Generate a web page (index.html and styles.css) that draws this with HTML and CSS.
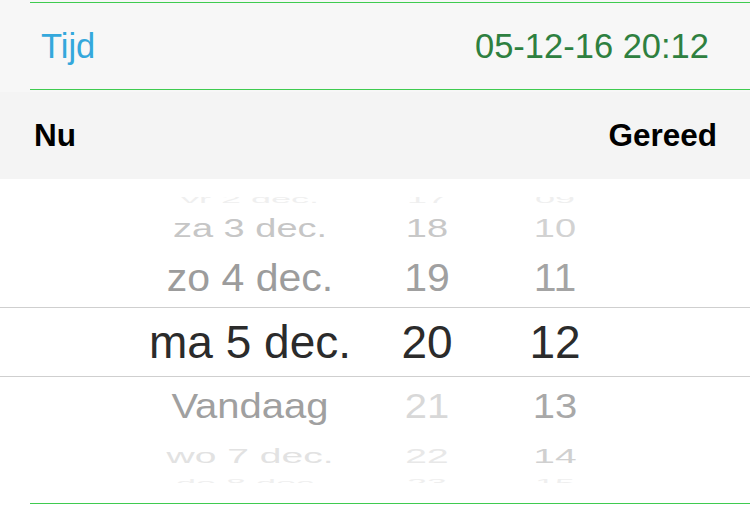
FILE: index.html
```html
<!DOCTYPE html>
<html lang="nl">
<head>
<meta charset="utf-8">
<title>Tijd</title>
<link rel="stylesheet" href="styles.css">
</head>
<body>
<div class="screen">
  <div class="field">
    <div class="green-line"></div>
    <div class="field-inner">
      <span class="field-label">Tijd</span>
      <span class="field-value">05-12-16 20:12</span>
    </div>
    <div class="green-line"></div>
  </div>
  <div class="toolbar">
    <span class="tb-btn">Nu</span>
    <span class="tb-btn">Gereed</span>
  </div>
  <div class="picker">
    <div class="prow r-top">
      <span class="cell c-date">vr 2 dec.</span><span class="cell c-h">17</span><span class="cell c-m">09</span>
    </div>
    <div class="prow r-za">
      <span class="cell c-date">za 3 dec.</span><span class="cell c-h">18</span><span class="cell c-m">10</span>
    </div>
    <div class="prow r-zo">
      <span class="cell c-date">zo 4 dec.</span><span class="cell c-h">19</span><span class="cell c-m">11</span>
    </div>
    <div class="prow r-sel">
      <span class="cell c-date">ma 5 dec.</span><span class="cell c-h">20</span><span class="cell c-m">12</span>
    </div>
    <div class="prow r-va">
      <span class="cell c-date">Vandaag</span><span class="cell c-h">21</span><span class="cell c-m">13</span>
    </div>
    <div class="prow r-wo">
      <span class="cell c-date">wo 7 dec.</span><span class="cell c-h">22</span><span class="cell c-m">14</span>
    </div>
    <div class="prow r-bot">
      <span class="cell c-date">do 8 dec.</span><span class="cell c-h">23</span><span class="cell c-m">15</span>
    </div>
  </div>
  <div class="green-line bottom"></div>
</div>
</body>
</html>
```

FILE: styles.css
```css
html, body {
  margin: 0;
  padding: 0;
  background: #ffffff;
}
.screen {
  width: 750px;
  height: 506px;
  overflow: hidden;
  font-family: "Liberation Sans", Arial, sans-serif;
}
.green-line {
  height: 1px;
  margin-left: 30px;
  background: #3fcb50;
}
.field {
  background: #f7f7f7;
  padding: 2px 0 2px 0;
}
.field-inner {
  margin-left: 30px;
  height: 86px;
  display: flex;
  align-items: center;
  justify-content: space-between;
  padding: 0 41px 0 11px;
  font-size: 34.5px;
}
.field-label {
  color: #34a8dc;
}
.field-value {
  color: #2e8040;
}
.toolbar {
  background: #f4f4f4;
  height: 87px;
  display: flex;
  align-items: center;
  justify-content: space-between;
  padding: 0 33px 0 34px;
  font-size: 31.5px;
  font-weight: bold;
  color: #000;
}
.picker {
  background: #fff;
  display: flex;
  flex-direction: column;
  padding-top: 18px;
  padding-bottom: 20px;
}
.prow {
  display: grid;
  grid-template-columns: 100px 300px 54px 202px;
  align-items: center;
  white-space: nowrap;
}
.cell {
  display: block;
  text-align: center;
  line-height: 6px;
}
.c-date { grid-column: 2; }
.c-h { grid-column: 3; }
.c-m { grid-column: 4; }

.r-top {
  height: 18px;
  overflow: hidden;
  font-size: 36px;
  color: #efefef;
}
.r-top .cell { transform: translateY(-7px) scaleY(0.32); }

.r-za {
  height: 26px;
  font-size: 38px;
}
.r-za .cell { transform: scaleY(0.7); }
.r-za .c-date { color: #c6c6c6; }
.r-za .c-h { color: #c8c8c8; }
.r-za .c-m { color: #d2d2d2; }

.r-zo {
  height: 59px;
  padding-top: 7px;
  font-size: 41px;
}
.r-zo .cell { transform: scaleY(0.95); }
.r-zo .c-date { color: #9c9c9c; }
.r-zo .c-h { color: #a0a0a0; }
.r-zo .c-m { color: #a4a4a4; }

.r-sel {
  height: 68px;
  border-top: 1px solid #cfcfcf;
  border-bottom: 1px solid #cfcfcf;
  font-size: 46px;
  color: #2b2b2b;
}

.r-va {
  height: 57px;
  font-size: 40px;
}
.r-va .cell { transform: scaleY(0.87); }
.r-va .c-date { color: #a0a0a0; }
.r-va .c-h { color: #d8d8d8; }
.r-va .c-m { color: #a8a8a8; }

.r-wo {
  height: 43px;
  font-size: 39px;
}
.r-wo .cell { transform: scaleY(0.52); }
.r-wo .c-date { color: #e2e2e2; }
.r-wo .c-h { color: #e8e8e8; }
.r-wo .c-m { color: #d0d0d0; }

.r-bot {
  height: 6px;
  overflow: hidden;
  font-size: 36px;
  color: #efefef;
}
.r-bot .cell { transform: translateY(3px) scaleY(0.3); }
```
